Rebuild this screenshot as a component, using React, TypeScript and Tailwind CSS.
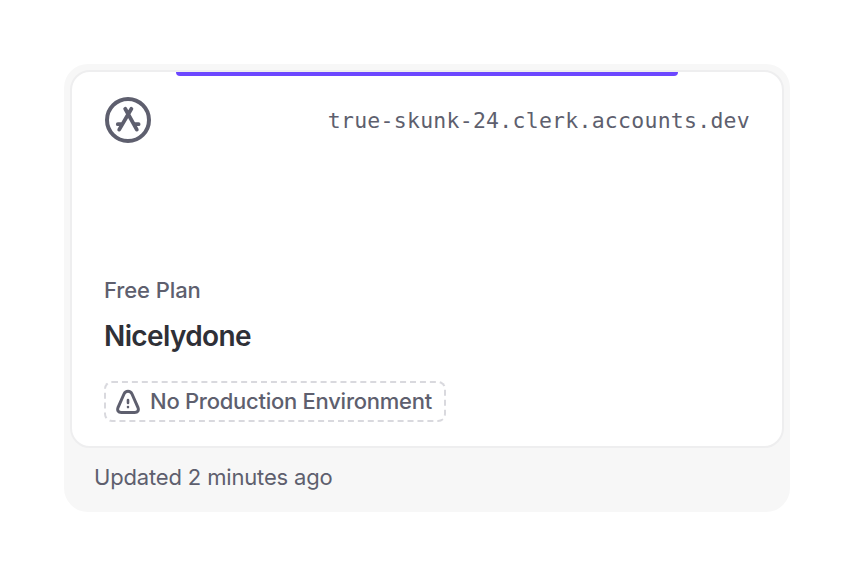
function AppIcon() {
  return (
    <svg className="size-12" viewBox="0 0 48 48" fill="none" stroke="#5e5f6e" strokeLinecap="round">
      <circle cx="24" cy="24" r="21" strokeWidth="4" />
      <path d="M21.2 12.8 32.8 33.6M27.4 12.8 15.2 33.6M31 28.2h3.6M13.8 28.2h4" strokeWidth="3.8" />
    </svg>
  );
}

function WarningIcon() {
  return (
    <svg className="h-[26px] w-6 shrink-0" viewBox="0 0 24 26" fill="none" stroke="#5e5f6e" strokeLinecap="round">
      <path
        d="M8 5C9.6 1.4 14.4 1.4 16 5L21.9 18.3C23.1 21.5 21.7 23.5 18.7 23.5H5.3C2.3 23.5.9 21.5 2.1 18.3Z"
        strokeWidth="3"
      />
      <path d="M12 11v3M12 18v.1" strokeWidth="2.6" />
    </svg>
  );
}

export default function App() {
  return (
    <main className="flex h-[576px] w-[854px] justify-center bg-white pt-16 font-['Inter',sans-serif] text-[#5e5f6e]">
      <article className="h-[448px] w-[726px] rounded-3xl bg-[#f7f7f7] p-1.5">
        <div className="flex h-[378px] flex-col rounded-[20px] border-2 border-[#eeeeef] bg-white">
          <div className="mx-auto h-1 w-[502px] shrink-0 rounded-b-[4px] bg-[#6c47ff]" />
          <header className="mt-5 flex h-12 items-center justify-between pr-8 pl-8">
            <AppIcon />
            <span className="mt-0.5 font-['DejaVu_Sans_Mono',monospace] text-[21.5px] leading-7 tracking-[0.25px]">
              true-skunk-24.clerk.accounts.dev
            </span>
          </header>
          <div className="mt-[132px] flex flex-col items-start pl-8">
            <p className="text-[22px] leading-7 font-medium tracking-[-0.1px]">Free Plan</p>
            <h2 className="mt-3.5 text-[28px] leading-9 font-semibold tracking-[-0.62px] text-[#2f3037]">Nicelydone</h2>
            <div className="mt-[27px] flex h-[41px] w-[342px] items-center gap-2.5 rounded-lg border-2 border-dashed border-[#d9d9de] pl-2.5">
              <WarningIcon />
              <span className="-mt-px text-[22px] leading-7 font-medium tracking-[-0.26px] whitespace-nowrap">
                No Production Environment
              </span>
            </div>
          </div>
        </div>
        <p className="mt-[15px] pl-6 text-[22px] leading-7 tracking-[-0.16px]">Updated 2 minutes ago</p>
      </article>
    </main>
  );
}
